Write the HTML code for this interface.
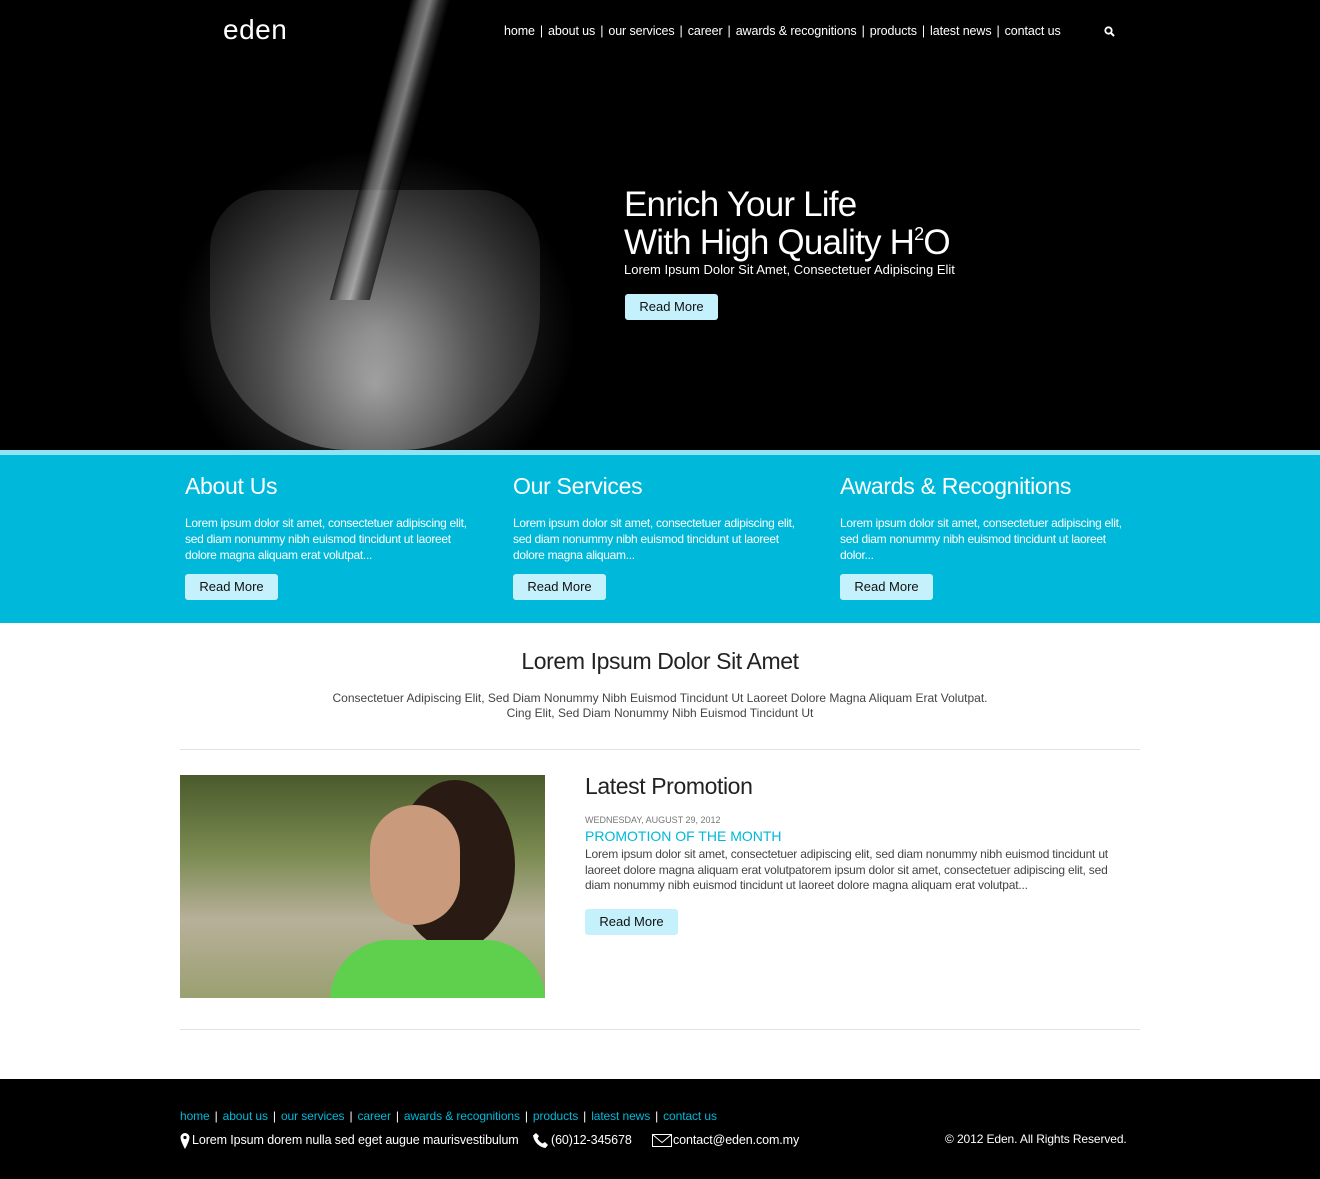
<!DOCTYPE html>
<html><head><meta charset="utf-8"><style>
*{margin:0;padding:0;box-sizing:border-box}
body{width:1320px;height:1179px;position:relative;background:#fff;font-family:"Liberation Sans",sans-serif;overflow:hidden}
.a{position:absolute;white-space:nowrap}
.btn{position:absolute;width:93px;height:26px;background:#c4f1fb;border-radius:3px;color:#111;font-size:13px;line-height:26px;text-align:center}
.nav{font-size:12.5px;letter-spacing:-0.1px;color:#fff}
.nav span{margin:0 5px}
.c h2{font-size:23px;font-weight:normal;color:#fff;letter-spacing:-0.3px}
.c p{font-size:12px;color:#fff;line-height:16px;margin-top:15px;letter-spacing:-0.3px;white-space:normal;width:292px}
</style></head><body>
<div class="a" style="left:0;top:0;width:1320px;height:450px;background:#000"></div>
<div class="a" style="left:176px;top:0;width:398px;height:450px;background:radial-gradient(ellipse 200px 180px at 200px 330px,#777 0%,#3a3a3a 45%,#141414 75%,#000 100%)"></div>
<div class="a" style="left:210px;top:190px;width:330px;height:260px;border-radius:60px 60px 140px 140px;background:radial-gradient(ellipse at 50% 75%,#ccc,#666 45%,#222 90%);opacity:.65"></div>
<div class="a" style="left:370px;top:0;width:40px;height:300px;background:linear-gradient(90deg,#000,#888,#ccc,#444,#000);transform:skewX(-15deg);opacity:.6"></div>
<div class="a" style="left:223px;top:14px;font-size:28px;color:#fff;letter-spacing:0.5px">eden</div>
<div class="a nav" style="left:504px;top:24px">home<span>|</span>about us<span>|</span>our services<span>|</span>career<span>|</span>awards &amp; recognitions<span>|</span>products<span>|</span>latest news<span>|</span>contact us</div>
<svg class="a" style="left:1104px;top:26px" width="11" height="11" viewBox="0 0 11 11"><circle cx="4.5" cy="4.5" r="3.2" stroke="#fff" stroke-width="1.8" fill="none"/><path d="M7 7l3 3" stroke="#fff" stroke-width="2"/></svg>
<div class="a" style="left:624px;top:186px;font-size:35px;line-height:38px;color:#fff;letter-spacing:-0.8px">Enrich Your Life<br>With High Quality H<span style="font-size:18px;position:relative;top:-14px">2</span>O</div>
<div class="a" style="left:624px;top:262px;font-size:13px;color:#fff">Lorem Ipsum Dolor Sit Amet, Consectetuer Adipiscing Elit</div>
<div class="btn" style="left:625px;top:294px">Read More</div>
<div class="a" style="left:0;top:450px;width:1320px;height:5px;background:#8fe3f3"></div>
<div class="a" style="left:0;top:455px;width:1320px;height:168px;background:#00b8d9"></div>
<div class="a c" style="left:185px;top:473px"><h2>About Us</h2><p>Lorem ipsum dolor sit amet, consectetuer adipiscing elit, sed diam nonummy nibh euismod tincidunt ut laoreet dolore magna aliquam erat volutpat...</p></div>
<div class="btn" style="left:185px;top:574px">Read More</div>
<div class="a c" style="left:513px;top:473px"><h2>Our Services</h2><p>Lorem ipsum dolor sit amet, consectetuer adipiscing elit, sed diam nonummy nibh euismod tincidunt ut laoreet dolore magna aliquam...</p></div>
<div class="btn" style="left:513px;top:574px">Read More</div>
<div class="a c" style="left:840px;top:473px"><h2>Awards &amp; Recognitions</h2><p>Lorem ipsum dolor sit amet, consectetuer adipiscing elit, sed diam nonummy nibh euismod tincidunt ut laoreet dolor...</p></div>
<div class="btn" style="left:840px;top:574px">Read More</div>
<div class="a" style="left:0;width:1320px;top:648px;text-align:center;font-size:23px;color:#222;letter-spacing:-0.4px">Lorem Ipsum Dolor Sit Amet</div>
<div class="a" style="left:0;width:1320px;top:691px;text-align:center;font-size:12px;line-height:15px;color:#444;letter-spacing:0px">Consectetuer Adipiscing Elit, Sed Diam Nonummy Nibh Euismod Tincidunt Ut Laoreet Dolore Magna Aliquam Erat Volutpat.<br>Cing Elit, Sed Diam Nonummy Nibh Euismod Tincidunt Ut</div>
<div class="a" style="left:180px;top:749px;width:960px;height:1px;background:#e2e2e2"></div>
<div class="a" style="left:180px;top:775px;width:365px;height:223px;overflow:hidden;background:linear-gradient(180deg,#4a5a2c 0%,#7a8a50 35%,#b8b09a 65%,#9aa070 100%)">
<div style="position:absolute;left:215px;top:5px;width:120px;height:170px;border-radius:50%;background:#2a1a14"></div>
<div style="position:absolute;left:190px;top:30px;width:90px;height:120px;border-radius:45px;background:#c99a7c"></div>
<div style="position:absolute;left:150px;top:165px;width:215px;height:80px;border-radius:60px 60px 0 0;background:#5fcf4e"></div>
</div>
<div class="a" style="left:585px;top:773px;font-size:23px;color:#222;letter-spacing:-0.4px">Latest Promotion</div>
<div class="a" style="left:585px;top:815px;font-size:9px;color:#777">WEDNESDAY, AUGUST 29, 2012</div>
<div class="a" style="left:585px;top:828px;font-size:14px;color:#00b8d9">PROMOTION OF THE MONTH</div>
<div class="a" style="left:585px;top:847px;width:548px;white-space:normal;font-size:12px;line-height:15.5px;color:#444;letter-spacing:-0.2px">Lorem ipsum dolor sit amet, consectetuer adipiscing elit, sed diam nonummy nibh euismod tincidunt ut laoreet dolore magna aliquam erat volutpatorem ipsum dolor sit amet, consectetuer adipiscing elit, sed diam nonummy nibh euismod tincidunt ut laoreet dolore magna aliquam erat volutpat...</div>
<div class="btn" style="left:585px;top:909px">Read More</div>
<div class="a" style="left:180px;top:1029px;width:960px;height:1px;background:#e2e2e2"></div>
<div class="a" style="left:0;top:1079px;width:1320px;height:100px;background:#000"></div>
<div class="a nav" style="left:180px;top:1109px;color:#00b8d9;font-size:12px">home<span style="color:#fff">|</span>about us<span style="color:#fff">|</span>our services<span style="color:#fff">|</span>career<span style="color:#fff">|</span>awards &amp; recognitions<span style="color:#fff">|</span>products<span style="color:#fff">|</span>latest news<span style="color:#fff">|</span>contact us</div>
<svg class="a" style="left:180px;top:1133px" width="10" height="16" viewBox="0 0 10 16"><path d="M5 0a4.5 4.5 0 0 0-4.5 4.5C.5 8 5 16 5 16s4.5-8 4.5-11.5A4.5 4.5 0 0 0 5 0z" fill="#fff"/><circle cx="5" cy="4.5" r="1.6" fill="#000"/></svg>
<div class="a nav" style="left:192px;top:1133px">Lorem Ipsum dorem nulla sed eget augue maurisvestibulum</div>
<svg class="a" style="left:533px;top:1133px" width="15" height="15" viewBox="0 0 15 15"><path d="M3 0l3 3-1.5 2.5c1 2 3 4 5 5L12 9l3 3-2.5 3C6 14 1 9 0 2.5z" fill="#fff"/></svg>
<div class="a nav" style="left:551px;top:1133px">(60)12-345678</div>
<svg class="a" style="left:652px;top:1134px" width="20" height="13" viewBox="0 0 20 13"><rect x=".5" y=".5" width="19" height="12" fill="none" stroke="#fff"/><path d="M.5.5l9.5 8 9.5-8" fill="none" stroke="#fff"/></svg>
<div class="a nav" style="left:673px;top:1133px">contact@eden.com.my</div>
<div class="a nav" style="left:945px;top:1132px;font-size:12px">© 2012 Eden. All Rights Reserved.</div>
</body></html>
